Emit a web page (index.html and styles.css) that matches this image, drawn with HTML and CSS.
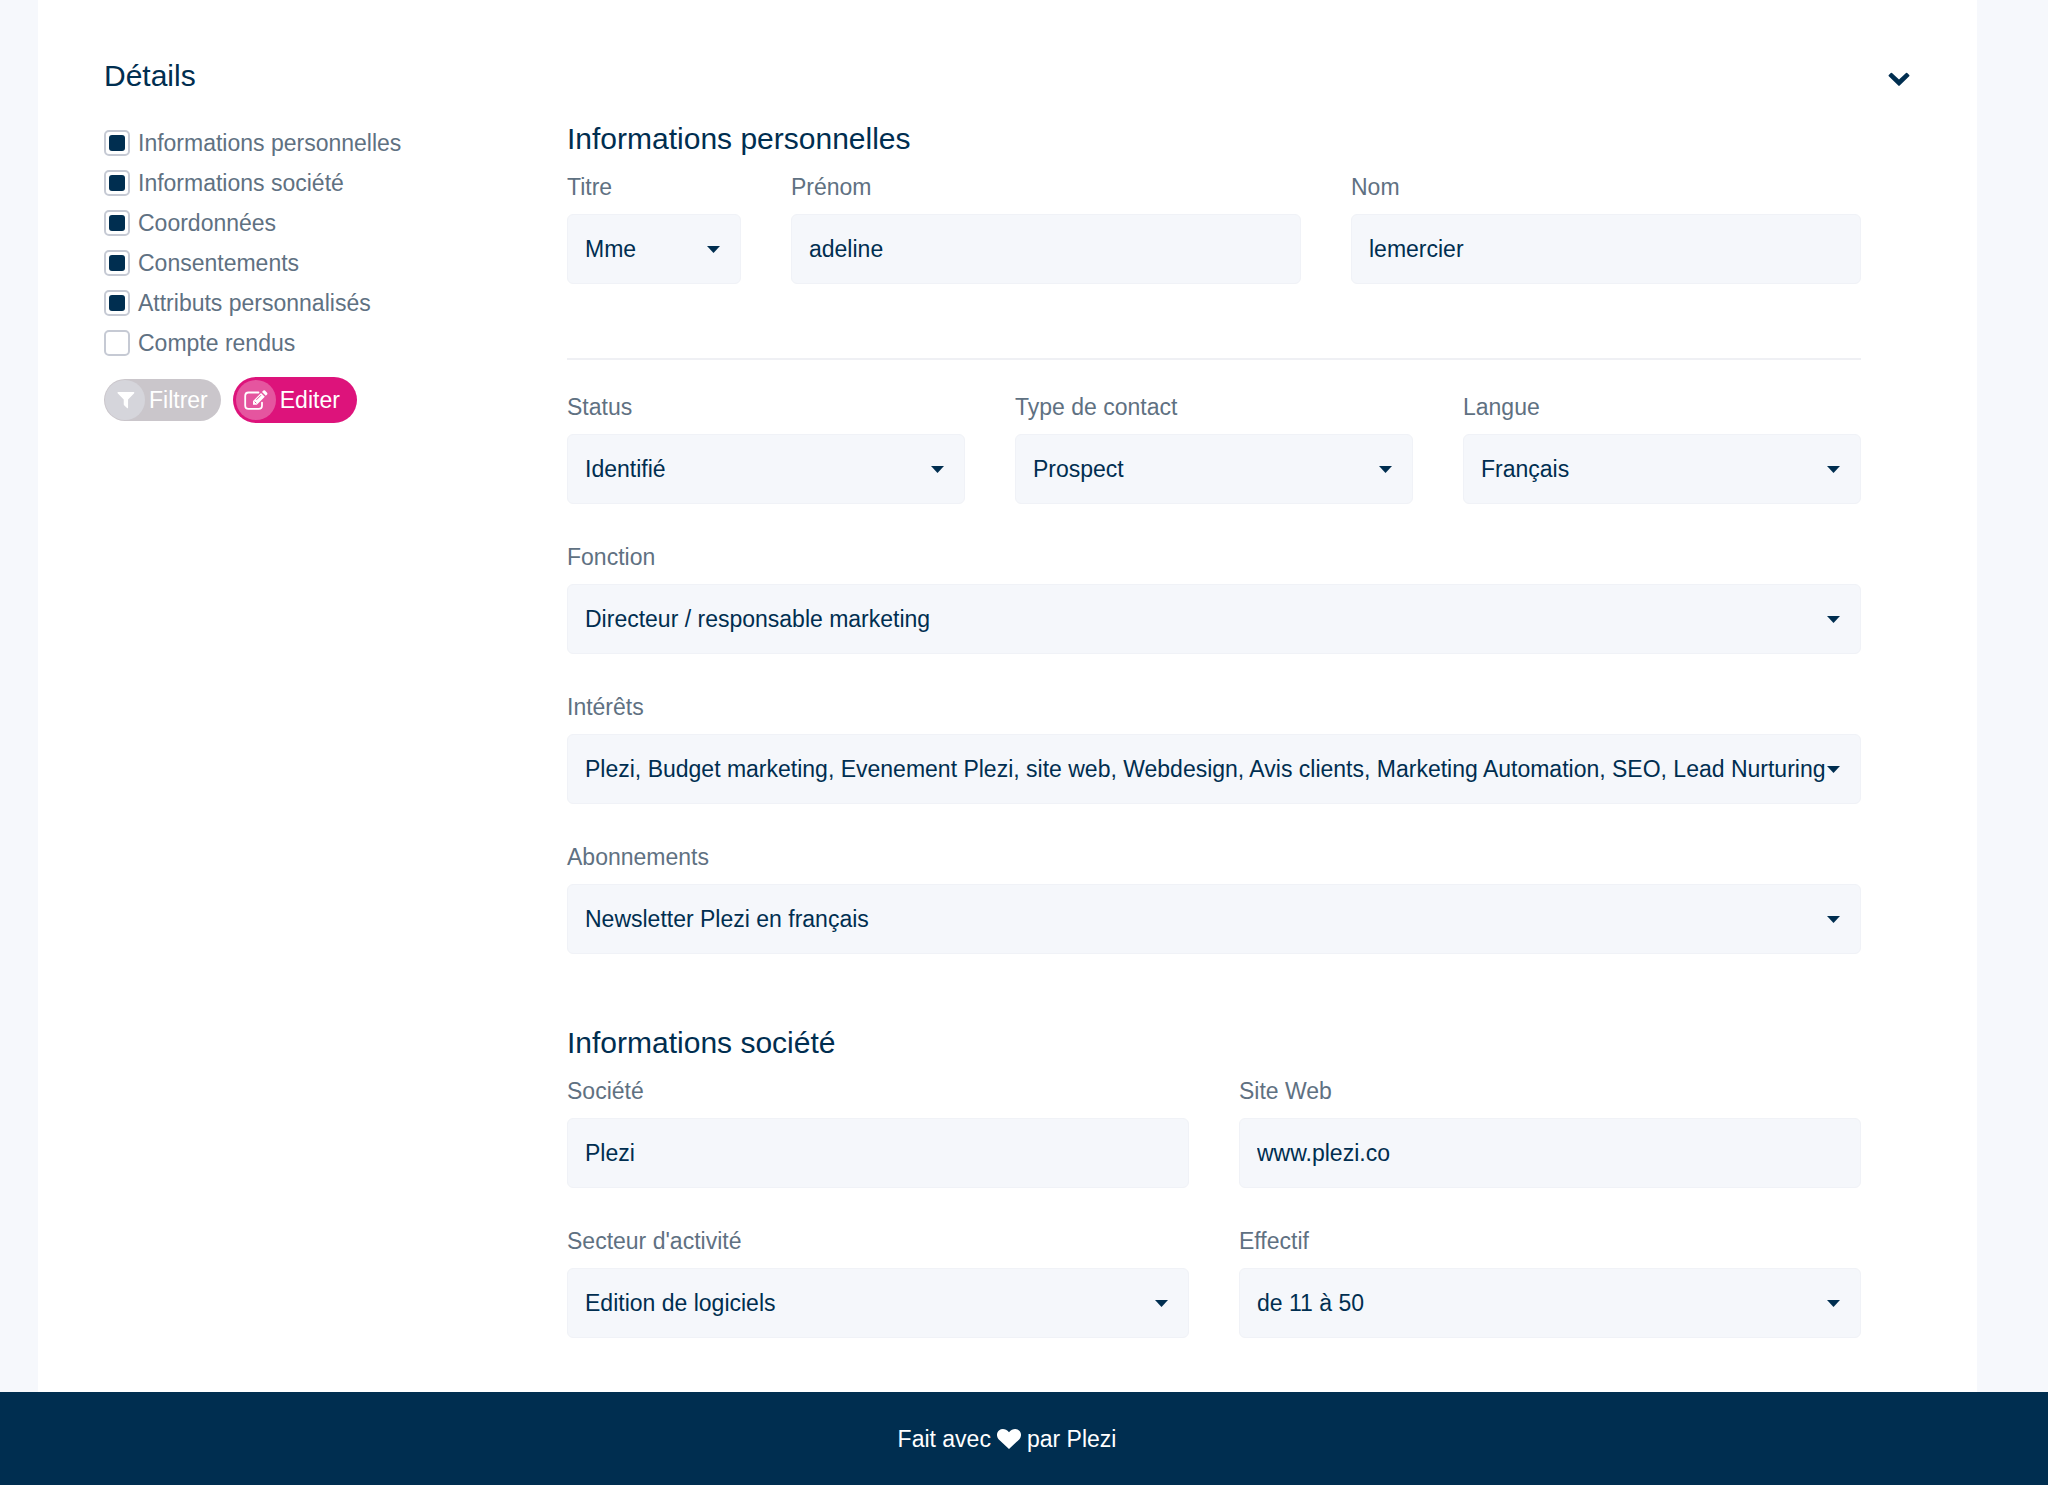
FILE: index.html
```html
<!DOCTYPE html>
<html lang="fr">
<head>
<meta charset="utf-8">
<meta name="viewport" content="width=device-width, initial-scale=1">
<title>Plezi – Détails du contact</title>
<link rel="stylesheet" href="styles.css">
</head>
<body>
<main class="card">
  <header class="card-header">
    <h1 class="heading">Détails</h1>
    <button class="toggle" type="button" aria-label="Replier">
      <svg width="22" height="15" viewBox="0 0 22 15" aria-hidden="true"><path d="M2.8 1 Q3.4 .5 4 1 L11 7.6 L18 1 Q18.6 .5 19.2 1 L21.2 3 Q21.8 3.6 21.2 4.2 L11.7 13.6 Q11 14.2 10.3 13.6 L.8 4.2 Q.2 3.6 .8 3 Z" fill="currentColor"/></svg>
    </button>
  </header>

  <div class="card-body">
    <form class="filters">
      <div class="filter-list">
        <label class="check"><input type="checkbox" checked>Informations personnelles</label>
        <label class="check"><input type="checkbox" checked>Informations société</label>
        <label class="check"><input type="checkbox" checked>Coordonnées</label>
        <label class="check"><input type="checkbox" checked>Consentements</label>
        <label class="check"><input type="checkbox" checked>Attributs personnalisés</label>
        <label class="check"><input type="checkbox">Compte rendus</label>
      </div>
      <div class="actions">
        <button class="pill pill-muted" type="button">
          <span class="pill-icon"><svg width="22" height="18" viewBox="-2 0 22 20" aria-hidden="true"><path d="M1.2 1 H18.8 Q19.8 1.6 19.2 2.4 L12.4 9.4 V18.6 Q12.2 19.6 11.2 19 L8 15.8 Q7.6 15.4 7.6 14.8 V9.4 L.8 2.4 Q.2 1.6 1.2 1 Z" fill="currentColor"/></svg></span>
          Filtrer
        </button>
        <button class="pill pill-primary" type="button">
          <span class="pill-icon"><svg width="24" height="20" viewBox="0 0 24 20" aria-hidden="true"><path d="M14.5 2.5 H4.6 Q1.2 2.5 1.2 5.9 V15.4 Q1.2 18.8 4.6 18.8 H14.6 Q18 18.8 18 15.4 V12.6" fill="none" stroke="currentColor" stroke-width="1.8" stroke-linecap="round"/><path d="M17 3 L20.8 6.8 L12.8 14.8 H9 V11 Z M18 2 L19.4 .6 Q20.2 0 21 .6 L23.1 2.7 Q23.8 3.5 23.1 4.4 L21.8 5.8 Z" fill="currentColor"/><path d="M10.6 11.6 L12.3 13.3 M12.4 9.8 L17 5.2" stroke="#e5559f" stroke-width="1"/></svg></span>
          Editer
        </button>
      </div>
    </form>

    <form class="details">
      <section>
        <h2 class="heading">Informations personnelles</h2>
        <div class="row row-name">
          <div class="field"><label for="titre">Titre</label><select id="titre"><option>Mme</option></select></div>
          <div class="field"><label for="prenom">Prénom</label><input id="prenom" type="text" value="adeline"></div>
          <div class="field"><label for="nom">Nom</label><input id="nom" type="text" value="lemercier"></div>
        </div>
        <hr class="divider">
        <div class="rows">
          <div class="row row-3">
            <div class="field"><label for="status">Status</label><select id="status"><option>Identifié</option></select></div>
            <div class="field"><label for="type">Type de contact</label><select id="type"><option>Prospect</option></select></div>
            <div class="field"><label for="langue">Langue</label><select id="langue"><option>Français</option></select></div>
          </div>
          <div class="field"><label for="fonction">Fonction</label><select id="fonction"><option>Directeur / responsable marketing</option></select></div>
          <div class="field"><label for="interets">Intérêts</label><select id="interets"><option>Plezi, Budget marketing, Evenement Plezi, site web, Webdesign, Avis clients, Marketing Automation, SEO, Lead Nurturing</option></select></div>
          <div class="field"><label for="abonnements">Abonnements</label><select id="abonnements"><option>Newsletter Plezi en français</option></select></div>
        </div>
      </section>

      <section>
        <h2 class="heading">Informations société</h2>
        <div class="rows">
          <div class="row row-2">
            <div class="field"><label for="societe">Société</label><input id="societe" type="text" value="Plezi"></div>
            <div class="field"><label for="site">Site Web</label><input id="site" type="text" value="www.plezi.co"></div>
          </div>
          <div class="row row-2">
            <div class="field"><label for="secteur">Secteur d'activité</label><select id="secteur"><option>Edition de logiciels</option></select></div>
            <div class="field"><label for="effectif">Effectif</label><select id="effectif"><option>de 11 à 50</option></select></div>
          </div>
        </div>
      </section>
    </form>
  </div>
</main>

<footer class="footer">
  <span>Fait avec</span>
  <svg width="24" height="20" viewBox="0 0 24 20" role="img" aria-label="amour"><path d="M12 20 L1.8 10.4 C-.8 7.6 -.5 3.4 2 1.4 C5 -.9 9 -.2 12 3.2 C15 -.2 19 -.9 22 1.4 C24.5 3.4 24.8 7.6 22.2 10.4 Z" fill="currentColor"/></svg>
  <span>par Plezi</span>
</footer>
</body>
</html>
```
FILE: styles.css
```css
:root {
  --navy: #002e50;
  --slate: #5f7182;
  --field: #f5f7fb;
  --field-border: #f0f2f7;
  --pink: #dd137b;
}

* {
  box-sizing: border-box;
}

body {
  display: flex;
  flex-direction: column;
  min-height: 100vh;
  margin: 0;
  background: #f6f8fc;
  color: var(--navy);
  font: 23px/30px "Liberation Sans", Arial, sans-serif;
}

button,
input,
select {
  font: inherit;
  color: inherit;
  margin: 0;
}

.card {
  flex: 1;
  margin: 0 71px 0 38px;
  padding: 58px 66px 53px;
  background: #fff;
}

.card-header {
  display: flex;
  align-items: center;
  justify-content: space-between;
  padding-right: 1px;
}

.heading {
  margin: 0;
  font-size: 30px;
  line-height: 36px;
  font-weight: 400;
}

.toggle {
  display: flex;
  padding: 6px 0 0;
  border: 0;
  background: none;
}

.card-body {
  display: grid;
  grid-template-columns: 463px minmax(0, 1fr);
  margin-top: 27px;
  padding-right: 50px;
}

.filters {
  padding-top: 2px;
}

.check {
  display: flex;
  align-items: center;
  gap: 8px;
  height: 40px;
  color: var(--slate);
}

.check input {
  appearance: none;
  display: grid;
  place-items: center;
  width: 26px;
  height: 26px;
  border: 2px solid #c6cad4;
  border-radius: 5px;
  background: #fff;
}

.check input:checked::before {
  content: "";
  width: 16px;
  height: 16px;
  border-radius: 3px;
  background: var(--navy);
}

.actions {
  display: flex;
  align-items: center;
  gap: 12px;
  margin-top: 14px;
}

.pill {
  display: flex;
  align-items: center;
  gap: 4px;
  height: 46px;
  padding: 0 17px 0 3px;
  border: 0;
  border-radius: 23px;
  color: #fff;
}

.pill-icon {
  display: grid;
  place-items: center;
  width: 40px;
  height: 40px;
  border-radius: 50%;
}

.pill-primary {
  background: var(--pink);
}

.pill-primary .pill-icon {
  background: #e5559f;
}

.pill-muted {
  height: 42px;
  padding: 0 13px 0 1px;
  background: #cac6cb;
}

.pill-muted .pill-icon {
  background: #d5d5db;
}

.details {
  display: grid;
  gap: 71px;
}

.details .heading {
  margin-bottom: 15px;
}

.rows {
  display: grid;
  gap: 38px;
}

.row {
  display: grid;
  gap: 50px;
}

.row-name {
  grid-template-columns: 174px 1fr 1fr;
}

.row-3 {
  grid-template-columns: repeat(3, 1fr);
}

.row-2 {
  grid-template-columns: repeat(2, 1fr);
}

.field {
  display: flex;
  flex-direction: column;
  gap: 12px;
  min-width: 0;
}

.field label {
  color: var(--slate);
}

.field input,
.field select {
  appearance: none;
  width: 100%;
  height: 70px;
  padding: 0 17px;
  border: 1px solid var(--field-border);
  border-radius: 6px;
  background-color: var(--field);
}

.field select {
  background-image: url("data:image/svg+xml,%3Csvg xmlns='http://www.w3.org/2000/svg' width='13' height='7'%3E%3Cpath d='M0 0h13L6.5 7z' fill='%23002e50'/%3E%3C/svg%3E");
  background-repeat: no-repeat;
  background-position: right 20px center;
}

.divider {
  height: 2px;
  margin: 74px 0 32px;
  border: 0;
  background: #eff0f4;
}

.footer {
  display: flex;
  align-items: center;
  justify-content: center;
  gap: 6px;
  height: 93px;
  padding-right: 34px;
  background: var(--navy);
  color: #fff;
}
```
